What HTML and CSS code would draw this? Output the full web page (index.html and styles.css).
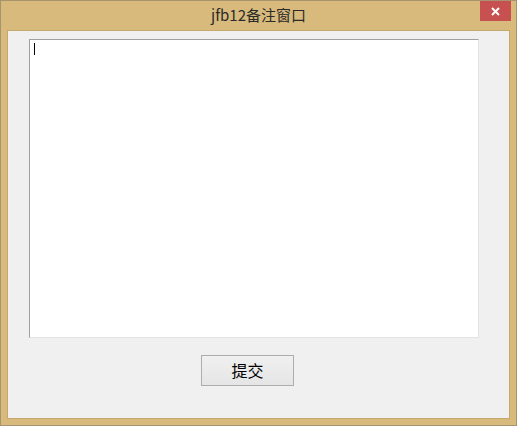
FILE: index.html
```html
<!DOCTYPE html>
<html lang="zh-CN">
<head>
<meta charset="utf-8">
<title>jfb12备注窗口</title>
<link rel="stylesheet" href="styles.css">
</head>
<body>
<div class="window">
  <div class="titlebar">
    <span class="spacer"></span>
    <span class="title">jfb12备注窗口</span>
    <button class="close" aria-label="关闭">
      <svg width="9" height="9" viewBox="0 0 9 9"><path d="M1 1 L8 8 M8 1 L1 8" stroke="#fff" stroke-width="2" fill="none"/></svg>
    </button>
  </div>
  <div class="client">
    <div class="memo"><span class="caret"></span></div>
    <div class="actions">
      <button class="submit">提交</button>
    </div>
  </div>
</div>
</body>
</html>
```
FILE: styles.css
```css
html, body {
  margin: 0;
  padding: 0;
}
body {
  width: 517px;
  height: 426px;
  overflow: hidden;
  font-family: "Noto Sans CJK SC", "Noto Sans", sans-serif;
}
.window {
  box-sizing: border-box;
  width: 517px;
  height: 426px;
  border: 1px solid #a89371;
  background: #d8bb7c;
  display: flex;
  flex-direction: column;
}
.titlebar {
  height: 29px;
  display: grid;
  grid-template-columns: 1fr auto 1fr;
  align-items: start;
}
.title {
  font-size: 15px;
  line-height: 28px;
  color: #2a2a2a;
  white-space: nowrap;
}
.close {
  justify-self: end;
  margin: 0 5px 0 0;
  width: 31px;
  height: 20px;
  padding: 0;
  border: 0;
  background: #c75050;
  display: flex;
  align-items: center;
  justify-content: center;
}
.close svg {
  display: block;
  margin-top: 1px;
}
.client {
  box-sizing: border-box;
  margin: 0 6px;
  height: 389px;
  border: 1px solid #c4a86e;
  background: #f0f0f0;
  display: flex;
  flex-direction: column;
}
.memo {
  box-sizing: border-box;
  margin: 8px 0 0 21px;
  width: 450px;
  height: 299px;
  background: #fff;
  border-style: solid;
  border-width: 1px;
  border-color: #a0a0a0 #e3e3e3 #e3e3e3 #a0a0a0;
  padding: 3px 0 0 4px;
}
.caret {
  display: block;
  width: 1px;
  height: 12px;
  background: #000;
}
.actions {
  display: flex;
  padding: 17px 0 0 193px;
}
.submit {
  box-sizing: border-box;
  width: 93px;
  height: 31px;
  border: 1px solid #adadad;
  background: linear-gradient(#f0f0f0, #e5e5e5);
  font-family: "Noto Sans CJK SC", sans-serif;
  font-size: 16px;
  color: #000;
  padding: 0 0 2px 0;
  margin: 0;
}
```
